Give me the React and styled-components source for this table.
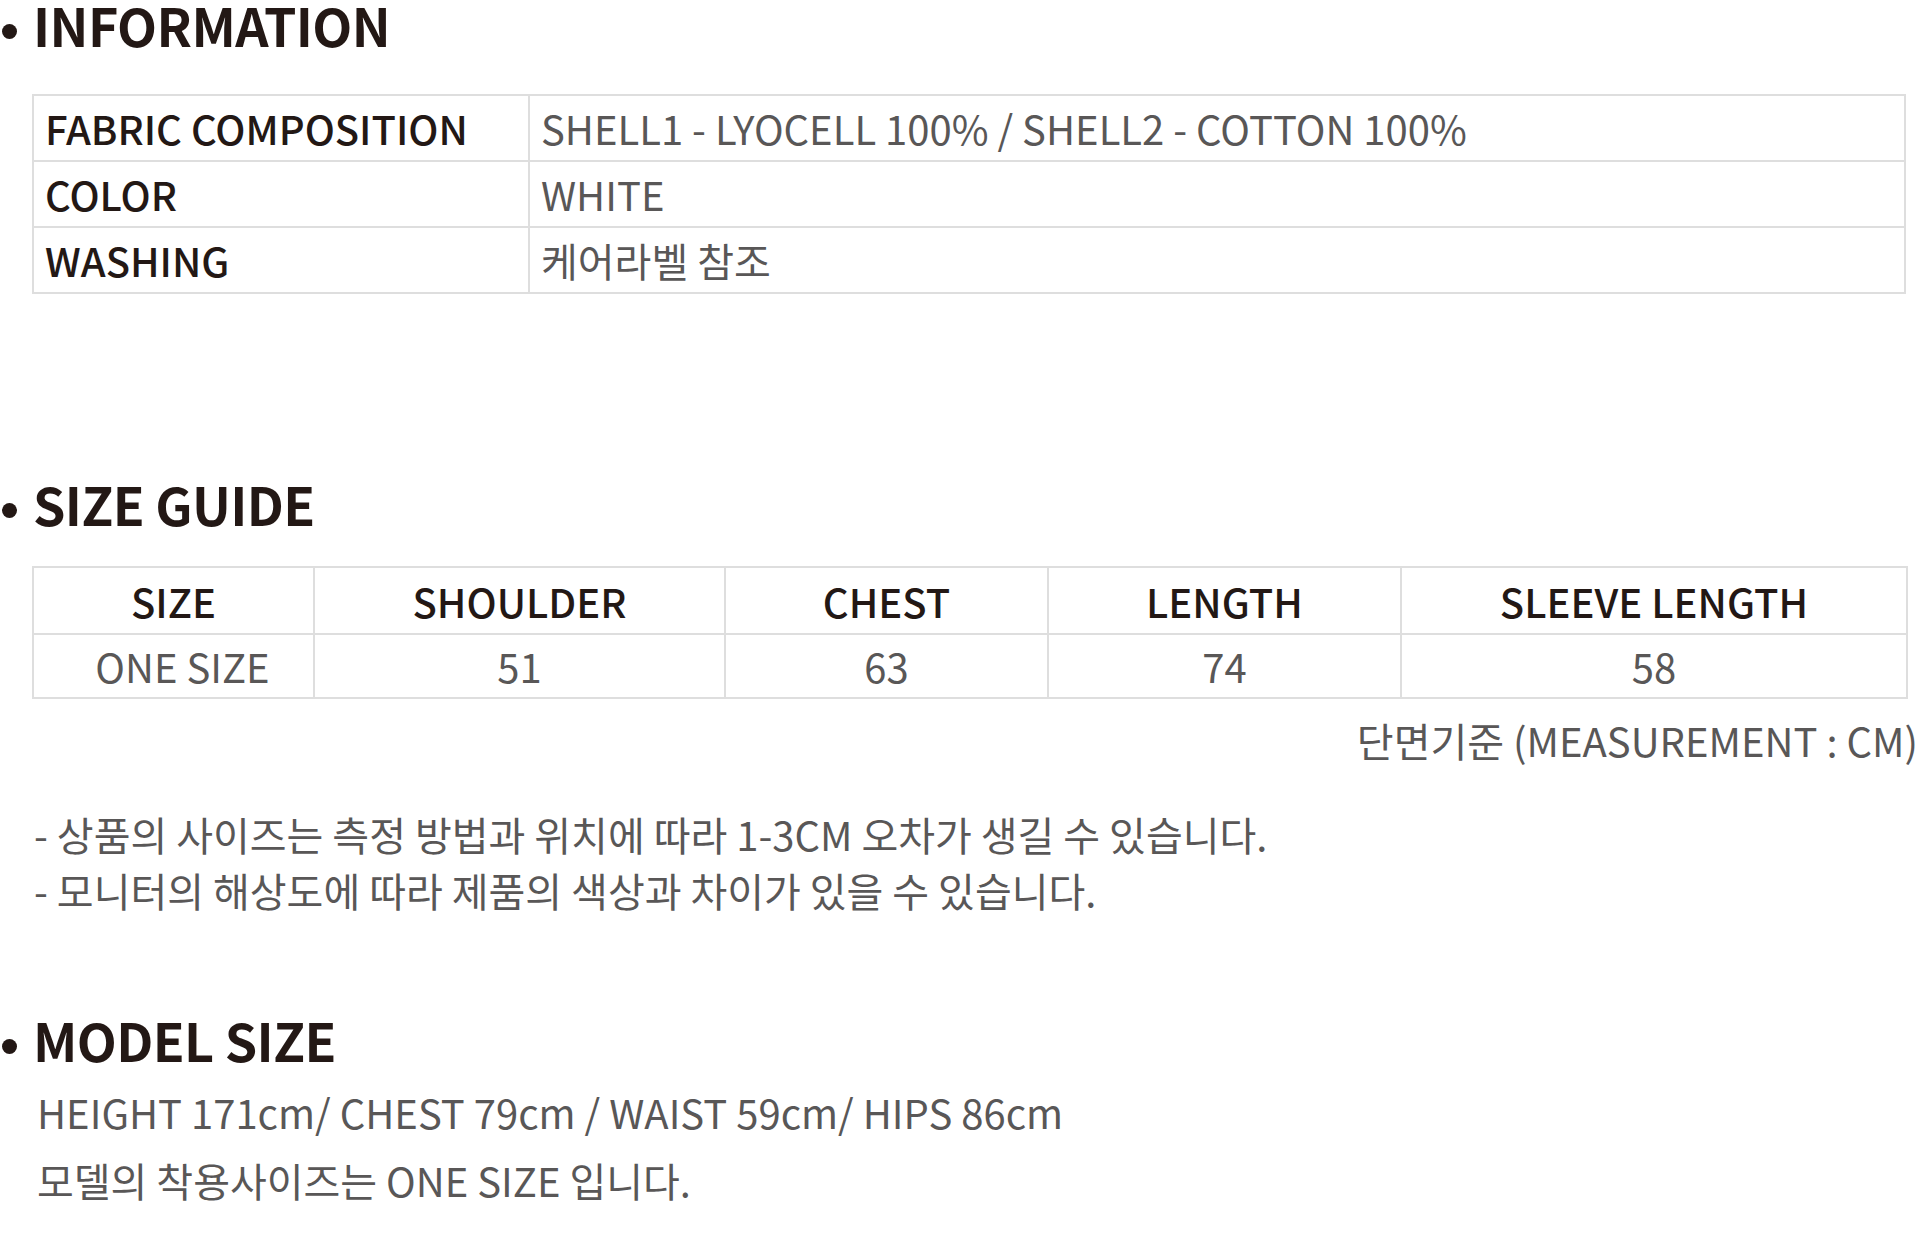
import React from 'react';
import styled, { createGlobalStyle } from 'styled-components';

const sizeColumns = [
  { label: 'SIZE', value: 'ONE SIZE', width: 281, shift: 18 },
  { label: 'SHOULDER', value: '51', width: 411 },
  { label: 'CHEST', value: '63', width: 323 },
  { label: 'LENGTH', value: '74', width: 353 },
  { label: 'SLEEVE LENGTH', value: '58', width: 506 },
];

const infoRows = [
  ['FABRIC COMPOSITION', 'SHELL1 - LYOCELL 100% / SHELL2 - COTTON 100%'],
  ['COLOR', 'WHITE'],
  ['WASHING', '케어라벨 참조'],
];

function App() {
  return (
    <>
      <GlobalStyle />
      <Page>
        <Heading $top={0}>
          <Bullet />
          INFORMATION
        </Heading>
        <InfoTable $top={45}>
          <colgroup>
            <col style={{ width: 496 }} />
            <col />
          </colgroup>
          <tbody>
            {infoRows.map(([label, value]) => (
              <tr key={label}>
                <InfoLabel>{label}</InfoLabel>
                <InfoValue>{value}</InfoValue>
              </tr>
            ))}
          </tbody>
        </InfoTable>

        <Heading $top={186}>
          <Bullet />
          SIZE GUIDE
        </Heading>
        <SizeTable>
          <colgroup>
            {sizeColumns.map(c => (
              <col key={c.label} style={{ width: c.width }} />
            ))}
          </colgroup>
          <thead>
            <tr>
              {sizeColumns.map(c => (
                <SizeHead key={c.label}>{c.label}</SizeHead>
              ))}
            </tr>
          </thead>
          <tbody>
            <tr>
              {sizeColumns.map(c => (
                <SizeCell key={c.label} $shift={c.shift || 0}>
                  {c.value}
                </SizeCell>
              ))}
            </tr>
          </tbody>
        </SizeTable>
        <Measurement>단면기준 (MEASUREMENT : CM)</Measurement>
        <Notes>
          <p>- 상품의 사이즈는 측정 방법과 위치에 따라 1-3CM 오차가 생길 수 있습니다.</p>
          <p>- 모니터의 해상도에 따라 제품의 색상과 차이가 있을 수 있습니다.</p>
        </Notes>

        <Heading $top={98}>
          <Bullet />
          MODEL SIZE
        </Heading>
        <ModelText>
          <p>HEIGHT 171cm/ CHEST 79cm / WAIST 59cm/ HIPS 86cm</p>
          <p>모델의 착용사이즈는 ONE SIZE 입니다.</p>
        </ModelText>
      </Page>
    </>
  );
}

export default App;

const GlobalStyle = createGlobalStyle`
  html, body {
    margin: 0;
    padding: 0;
    background: #ffffff;
  }
  body {
    font-family: "Noto Sans CJK KR", "Noto Sans", sans-serif;
    color: #231815;
  }
`;

const Page = styled.div`
  width: 1920px;
  height: 1239px;
  overflow: hidden;
  box-sizing: border-box;
  padding: 1px 14px 0 0;
`;

const Heading = styled.h2`
  display: flex;
  align-items: center;
  margin: ${({ $top }) => $top}px 0 0 0;
  height: 48px;
  font-size: 52px;
  font-weight: 700;
  line-height: 48px;
  letter-spacing: -0.6px;
  color: #231815;
`;

const Bullet = styled.span`
  display: inline-block;
  flex: none;
  align-self: flex-start;
  width: 15px;
  height: 15px;
  margin: 23px 16px 0 2px;
  border-radius: 50%;
  background: #231815;
`;

const InfoTable = styled.table`
  margin: ${({ $top }) => $top}px 0 0 32px;
  width: 1874px;
  border-collapse: collapse;
  table-layout: fixed;
  border: 2px solid #dedede;

  td {
    height: 64px;
    padding: 0 0 0 11px;
    border: 2px solid #dedede;
    font-size: 40px;
    line-height: 1;
    white-space: nowrap;
  }
`;

const InfoLabel = styled.td`
  font-weight: 500;
  color: #231815;
`;

const InfoValue = styled.td`
  font-weight: 400;
  color: #595757;
`;

const SizeTable = styled.table`
  margin: 38px 0 0 32px;
  width: 1874px;
  border-collapse: collapse;
  table-layout: fixed;
  border: 2px solid #dedede;
`;

const SizeHead = styled.th`
  height: 65px;
  padding: 0;
  border: 2px solid #dedede;
  font-size: 40px;
  font-weight: 500;
  line-height: 1;
  color: #231815;
  text-align: center;
`;

const SizeCell = styled.td`
  height: 62px;
  padding: 0 0 0 ${({ $shift }) => $shift}px;
  border: 2px solid #dedede;
  font-size: 40px;
  font-weight: 400;
  line-height: 1;
  color: #595757;
  text-align: center;
`;

const Measurement = styled.div`
  margin: 16px -12px 0 0;
  font-size: 40px;
  line-height: 50px;
  text-align: right;
  color: #595757;
  white-space: nowrap;
`;

const Notes = styled.div`
  margin: 41px 0 0 34px;
  color: #595757;
  font-size: 40px;
  line-height: 56px;

  p {
    margin: 0;
    white-space: nowrap;
  }
`;

const ModelText = styled.div`
  margin: 14px 0 0 37px;
  color: #595757;
  font-size: 40px;
  line-height: 68px;

  p {
    margin: 0;
    white-space: nowrap;
  }
`;
